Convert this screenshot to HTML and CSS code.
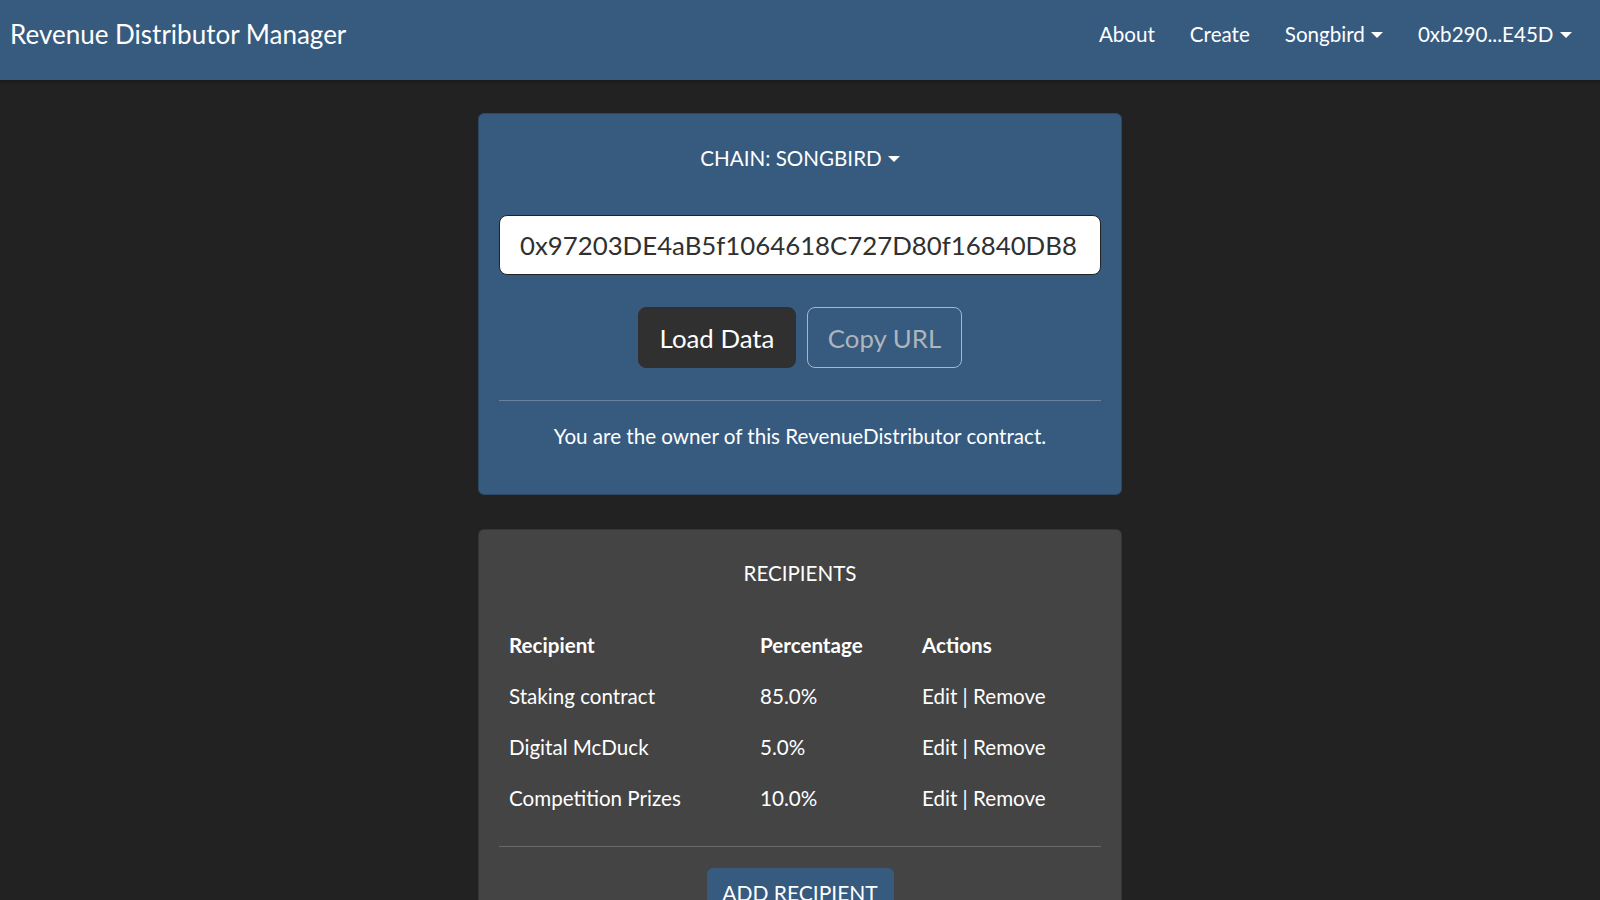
FILE: index.html
```html
<!DOCTYPE html>
<html lang="en">
<head>
<meta charset="utf-8">
<title>Revenue Distributor Manager</title>
<link rel="stylesheet" href="styles.css">
</head>
<body>
<nav class="navbar">
  <div class="brand">Revenue Distributor Manager</div>
  <ul class="nav">
    <li class="nav-link">About</li>
    <li class="nav-link">Create</li>
    <li class="nav-link">Songbird<span class="caret"></span></li>
    <li class="nav-link">0xb290...E45D<span class="caret"></span></li>
  </ul>
</nav>
<main class="main">
  <section class="card card-primary">
    <div class="chain">CHAIN: SONGBIRD<span class="caret"></span></div>
    <div class="address-input">0x97203DE4aB5f1064618C727D80f16840DB8</div>
    <div class="btn-row">
      <button class="btn btn-dark">Load Data</button>
      <button class="btn btn-outline">Copy URL</button>
    </div>
    <hr class="divider divider-light">
    <p class="owner">You are the owner of this RevenueDistributor contract.</p>
  </section>
  <section class="card card-secondary">
    <div class="card-title">RECIPIENTS</div>
    <div class="table">
      <div class="row head">
        <div>Recipient</div><div>Percentage</div><div>Actions</div>
      </div>
      <div class="row">
        <div>Staking contract</div><div>85.0%</div><div>Edit | Remove</div>
      </div>
      <div class="row">
        <div>Digital McDuck</div><div>5.0%</div><div>Edit | Remove</div>
      </div>
      <div class="row">
        <div>Competition Prizes</div><div>10.0%</div><div>Edit | Remove</div>
      </div>
    </div>
    <hr class="divider divider-gray">
    <div class="add-row">
      <button class="btn btn-primary">ADD RECIPIENT</button>
    </div>
  </section>
</main>
</body>
</html>
```
FILE: styles.css
```css
* { box-sizing: border-box; }
html, body { margin: 0; padding: 0; }
body {
  background: #222;
  color: #fff;
  font-family: Lato, "Open Sans", sans-serif;
  font-size: 20.6px;
  line-height: 30px;
  height: 900px;
  overflow: hidden;
}
.navbar {
  height: 80px;
  background: #375a7f;
  display: flex;
  align-items: flex-start;
  justify-content: space-between;
  padding: 0 11px 0 10px;
  box-shadow: 0 2px 3px rgba(0,0,0,0.25);
}
.brand {
  font-size: 26px;
  line-height: 34px;
  margin-top: 17px;
}
.nav {
  list-style: none;
  margin: 19px 0 0;
  padding: 0;
  display: flex;
}
.nav-link {
  padding: 0 17.5px;
  font-size: 20.6px;
  line-height: 30px;
}
.caret {
  display: inline-block;
  margin-left: 6px;
  vertical-align: 4px;
  border-top: 6px solid #fff;
  border-left: 6px solid transparent;
  border-right: 6px solid transparent;
}
.main {
  display: flex;
  flex-direction: column;
  align-items: center;
  padding-top: 33px;
  gap: 34px;
}
.card {
  width: 644px;
  border-radius: 6px;
  padding: 20px;
  border: 1px solid rgba(0,0,0,0.2);
}
.card-primary { background: #375a7f; }
.card-secondary { background: #444; }
.chain {
  text-align: center;
  padding: 9px 0 10px;
}
.address-input {
  margin-top: 32px;
  height: 60px;
  background: #fff;
  color: #303030;
  border: 1px solid #222;
  border-radius: 8px;
  font-size: 25.8px;
  line-height: 58px;
  padding: 0 20px;
  white-space: nowrap;
  overflow: hidden;
}
.btn-row {
  margin-top: 32px;
  display: flex;
  justify-content: center;
  gap: 11px;
}
.btn {
  font-family: inherit;
  border-radius: 8px;
  cursor: pointer;
}
.btn-dark, .btn-outline {
  height: 61px;
  font-size: 25.8px;
  padding: 0;
}
.btn-dark {
  background: #303030;
  color: #fff;
  border: 1px solid #303030;
  width: 158px;
}
.btn-outline {
  background: transparent;
  color: #adb5bd;
  border: 1px solid #adb5bd;
  width: 155px;
}
.divider {
  border: 0;
  height: 1px;
  margin: 0;
}
.divider-light {
  margin-top: 32px;
  background: rgba(255,255,255,0.25);
}
.owner {
  margin: 20px 0 23px;
  text-align: center;
}
.card-title {
  text-align: center;
  margin-top: 8px;
}
.table {
  margin-top: 31px;
}
.row {
  display: grid;
  grid-template-columns: 251px 162px 1fr;
  height: 51px;
  align-items: center;
}
.row > div { padding-left: 10px; }
.row.head { font-weight: 700; }
.divider-gray {
  margin-top: 23px;
  background: rgba(255,255,255,0.2);
}
.add-row {
  margin-top: 21px;
  display: flex;
  justify-content: center;
}
.btn-primary {
  background: #375a7f;
  color: #fff;
  border: 1px solid #375a7f;
  font-size: 21px;
  height: 48px;
  width: 187px;
  border-radius: 6px;
  padding: 0;
}
```
